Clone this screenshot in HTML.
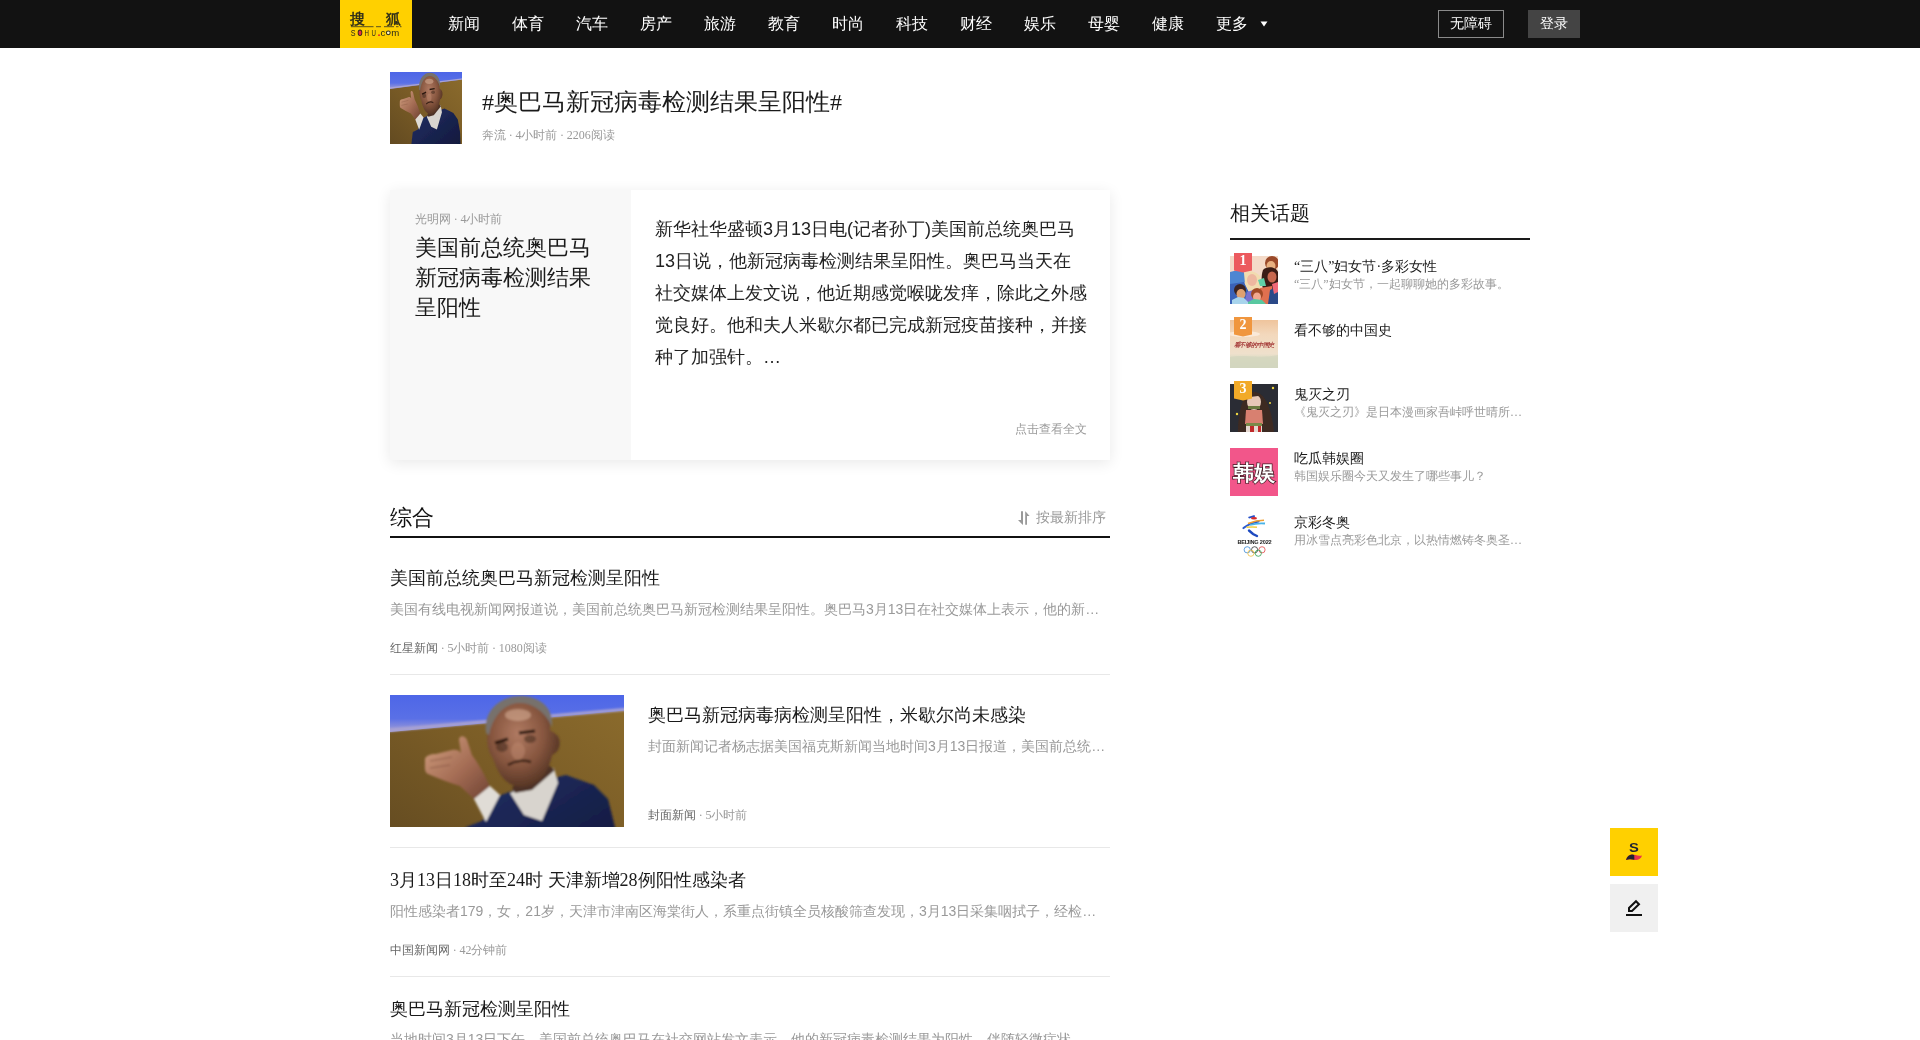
<!DOCTYPE html>
<html><head><meta charset="utf-8">
<style>
*{margin:0;padding:0;box-sizing:border-box}
html,body{width:1920px;height:1040px;overflow:hidden;background:#fff}
body{font-family:"Liberation Sans",sans-serif;color:#1a1a1a;position:relative}
.abs{position:absolute;white-space:nowrap}
.serif{font-family:"Liberation Serif",serif}
#nav{position:absolute;left:0;top:0;width:1920px;height:48px;background:#121212}
.nv{position:absolute;top:0;height:48px;line-height:48px;font-size:16px;color:#fff}
.btn1{position:absolute;left:1438px;top:10px;width:66px;height:28px;border:1px solid #8a8a8a;color:#fff;font-size:14px;line-height:24px;text-align:center}
.btn2{position:absolute;left:1528px;top:10px;width:52px;height:28px;background:#444;color:#fff;font-size:14px;line-height:26px;text-align:center}
#card{position:absolute;left:390px;top:190px;width:720px;height:270px;background:#fff;box-shadow:0 3px 14px rgba(0,0,0,.09)}
#cardl{position:absolute;left:0;top:0;width:241px;height:270px;background:#f8f8f8}
.ttl18{font-size:18px;line-height:24px;color:#1a1a1a}
.desc{font-size:14px;line-height:20px;color:#999}
.meta{font-size:12px;line-height:16px;color:#999;word-spacing:-0.3px}
.meta b{font-weight:normal;color:#666}
.divl{position:absolute;left:390px;width:720px;height:1px;background:#e8e8e8}
.tp{position:absolute;left:1230px;width:300px;height:48px}
.tp .im{position:absolute;left:0;top:0;width:48px;height:48px;overflow:hidden}
.tp .t{position:absolute;left:64px;top:1px;font-family:"Liberation Serif",serif;font-size:14px;line-height:20px;color:#1a1a1a;white-space:nowrap}
.tp .d{position:absolute;left:64px;top:20px;font-family:"Liberation Serif",serif;font-size:12px;line-height:16px;color:#999;white-space:nowrap}
.badge{position:absolute;left:4px;top:-3px}
</style></head>
<body>
<svg width="0" height="0" style="position:absolute">
<defs>
<linearGradient id="gBrown" x1="0" y1="1" x2="1" y2="0">
  <stop offset="0" stop-color="#5e4720"/>
  <stop offset="0.5" stop-color="#7a5c26"/>
  <stop offset="1" stop-color="#8e6e2e"/>
</linearGradient>
<linearGradient id="gBlue" x1="0" y1="0" x2="0" y2="1">
  <stop offset="0" stop-color="#4862e8"/>
  <stop offset="0.7" stop-color="#5a70e6"/>
  <stop offset="1" stop-color="#a9a2d4"/>
</linearGradient>
<radialGradient id="gFace" cx="0.42" cy="0.4" r="0.65">
  <stop offset="0" stop-color="#b07a62"/>
  <stop offset="0.55" stop-color="#87563f"/>
  <stop offset="1" stop-color="#4e3020"/>
</radialGradient>
<linearGradient id="gHand" x1="0" y1="0" x2="1" y2="1">
  <stop offset="0" stop-color="#d2a080"/>
  <stop offset="0.55" stop-color="#a46c54"/>
  <stop offset="1" stop-color="#6e4232"/>
</linearGradient>
<linearGradient id="gSuit" x1="0" y1="0" x2="1" y2="1">
  <stop offset="0" stop-color="#243066"/>
  <stop offset="1" stop-color="#0e1638"/>
</linearGradient>
<filter id="soft2" x="-10%" y="-10%" width="120%" height="120%"><feGaussianBlur stdDeviation="0.5"/></filter>
<filter id="soft" x="-10%" y="-10%" width="120%" height="120%"><feGaussianBlur stdDeviation="1"/></filter>
<g id="obama">
  <rect x="-10" y="-10" width="260" height="190" fill="url(#gBrown)"/>
  <path d="M-10 -10H250V14L-10 38Z" fill="url(#gBlue)"/>
  <g filter="url(#soft)">
  <path d="M-10 36L250 13" stroke="#aaa3d2" stroke-width="3" fill="none"/>
  <path d="M68 180L76 132L92 126L106 102L122 96L150 86L176 80L204 90L218 104L225 132L228 180Z" fill="url(#gSuit)"/>
  <path d="M120 98L142 88L164 73L168 88L152 126L134 120Z" fill="#d8d4ce"/>
  <path d="M122 92L158 70L165 75L142 95L125 98Z" fill="#4e3226"/>
  <path d="M98 34C97 12 115 3 129 3C149 3 162 14 160 35L167 40C172 46 170 57 162 60C159 76 150 91 133 92C117 92 108 80 103 63C98 57 96 47 98 34Z" fill="url(#gFace)"/>
  <path d="M96 38C93 14 112 1 130 1C150 1 164 13 162 32C157 20 145 8 130 8C115 8 103 20 99 40Z" fill="#77716c"/>
  <ellipse cx="128" cy="20" rx="13" ry="6" fill="#d8b098" opacity=".55"/>
  <ellipse cx="112" cy="52" rx="6" ry="5" fill="#3a2418" opacity=".5"/><ellipse cx="140" cy="44" rx="6" ry="4" fill="#3a2418" opacity=".5"/>
  <ellipse cx="128" cy="56" rx="7" ry="9" fill="#c08a70" opacity=".5"/>
  <path d="M105 48L118 44M129 38L145 36" stroke="#2a1810" stroke-width="3" fill="none"/>
  <path d="M118 70C126 65 136 65 141 67" stroke="#3a2218" stroke-width="2.5" fill="none"/>
  <path d="M35 66C34 61 40 59 46 59L62 55C66 54 69 55 71 58L69 45C69 40 75 40 77 45L82 60C88 68 95 80 100 92L98 100C92 104 86 105 84 104L70 91C60 88 48 83 38 79C34 77 35 71 35 66Z" fill="url(#gHand)"/>
  <path d="M40 66L62 62M40 73L60 70" stroke="#7a4a38" stroke-width="1.2" fill="none" opacity=".6"/>
  <path d="M84 104L100 91L110 100L96 127Z" fill="#e0dcd6"/>
  </g>
</g>
</defs>
</svg>
<div id="wrap" style="position:absolute;left:0;top:0;width:1920px;height:1040px;will-change:transform">
<div id="nav">
  <svg id="logo" width="72" height="48" viewBox="0 0 72 48" style="position:absolute;left:340px;top:0">
  <rect width="72" height="48" fill="#ffd000"/>
  <text x="10" y="23.6" font-size="15" fill="#2a2a1a" stroke="#2a2a1a" stroke-width="0.45" font-family="Liberation Serif">搜</text>
  <text x="45.5" y="23.6" font-size="15" fill="#2a2a1a" stroke="#2a2a1a" stroke-width="0.45" font-family="Liberation Serif">狐</text>
  <path d="M11 26.7H33.5M36 26.7H41M44 26.7H54M56 26.7H58.5M60 26.7H61.5" stroke="#4a4420" stroke-width="0.9" fill="none"/>
  <g font-family="Liberation Sans" font-size="9" fill="#2a2a1a">
    <text x="0" y="36" transform="translate(10.8 0) scale(0.8 1)">S</text>
    <ellipse cx="20" cy="32.8" rx="2.3" ry="3.2" fill="#2a2a1a"/>
    <ellipse cx="20" cy="32.8" rx="1.5" ry="2.4" fill="#e83040"/>
    <text x="0" y="36" transform="translate(24.6 0) scale(0.68 1)">H</text>
    <text x="0" y="36" transform="translate(31.6 0) scale(0.68 1)">U</text>
    <rect x="38.2" y="34.4" width="1.6" height="1.6" fill="#e02020"/>
    <text x="40.6" y="36" font-size="9.6">c</text>
    <circle cx="48.3" cy="32.8" r="2.4" fill="#2a2a1a"/>
    <circle cx="48.3" cy="32.8" r="1.4" fill="#fff6c0"/>
    <text x="51.2" y="36" font-size="9.6">m</text>
  </g>
</svg>
  <div class="nv" style="left:448px">新闻</div>
  <div class="nv" style="left:512px">体育</div>
  <div class="nv" style="left:576px">汽车</div>
  <div class="nv" style="left:640px">房产</div>
  <div class="nv" style="left:704px">旅游</div>
  <div class="nv" style="left:768px">教育</div>
  <div class="nv" style="left:832px">时尚</div>
  <div class="nv" style="left:896px">科技</div>
  <div class="nv" style="left:960px">财经</div>
  <div class="nv" style="left:1024px">娱乐</div>
  <div class="nv" style="left:1088px">母婴</div>
  <div class="nv" style="left:1152px">健康</div>
  <div class="nv" style="left:1216px">更多</div>
  <svg class="abs" style="left:1260px;top:21px" width="8" height="6" viewBox="0 0 8 6"><path d="M0.5 0.5H7.5L4 5.5Z" fill="#fff"/></svg>
  <div class="btn1">无障碍</div>
  <div class="btn2">登录</div>
</div>

<!-- topic header -->
<svg class="abs" style="left:390px;top:72px" width="72" height="72" viewBox="0 0 72 72"><use href="#obama" transform="translate(-1.3,0.3) scale(0.317,0.453)"/></svg>
<div class="abs serif" style="left:482px;top:86px;font-size:24px;line-height:32px;color:#1a1a1a">#奥巴马新冠病毒检测结果呈阳性#</div>
<div class="abs serif meta" style="left:482px;top:127px">奔流 · 4小时前 · 2206阅读</div>

<!-- card -->
<div id="card">
  <div id="cardl"></div>
  <div class="abs meta serif" style="left:25px;top:21px">光明网 · 4小时前</div>
  <div class="abs" style="left:25px;top:43px;font-size:22px;line-height:30px;color:#1a1a1a;white-space:normal">美国前总统奥巴马<br>新冠病毒检测结果<br>呈阳性</div>
  <div class="abs" style="left:265px;top:23px;font-size:18px;line-height:32px;color:#222;white-space:normal">新华社华盛顿3月13日电(记者孙丁)美国前总统奥巴马<br>13日说，他新冠病毒检测结果呈阳性。奥巴马当天在<br>社交媒体上发文说，他近期感觉喉咙发痒，除此之外感<br>觉良好。他和夫人米歇尔都已完成新冠疫苗接种，并接<br>种了加强针。…</div>
  <div class="abs meta" style="left:625px;top:231px">点击查看全文</div>
</div>

<!-- section header -->
<div class="abs" style="left:390px;top:504px;font-size:22px;line-height:28px;color:#111">综合</div>
<svg class="abs" style="left:1018px;top:511px" width="12" height="14" viewBox="0 0 12 14"><path d="M3 0.2H5V13.8H4.6L0 9H3Z" fill="#999"/><path d="M7.2 13.8V0.6H7.6L11.6 4.9H9V13.8Z" fill="#999"/></svg>
<div class="abs" style="left:1036px;top:507px;font-size:14px;line-height:20px;color:#999">按最新排序</div>
<div class="abs" style="left:390px;top:536px;width:720px;height:2px;background:#111"></div>

<!-- list item 1 -->
<div class="abs serif ttl18" style="left:390px;top:566px">美国前总统奥巴马新冠检测呈阳性</div>
<div class="abs desc" style="left:390px;top:599px">美国有线电视新闻网报道说，美国前总统奥巴马新冠检测结果呈阳性。奥巴马3月13日在社交媒体上表示，他的新…</div>
<div class="abs serif meta" style="left:390px;top:640px"><b>红星新闻</b> · 5小时前 · 1080阅读</div>
<div class="divl" style="top:674px"></div>

<!-- list item 2 -->
<svg class="abs" style="left:390px;top:695px" width="234" height="132" viewBox="0 0 234 132"><use href="#obama"/></svg>
<div class="abs serif ttl18" style="left:648px;top:703px">奥巴马新冠病毒病检测呈阳性，米歇尔尚未感染</div>
<div class="abs desc" style="left:648px;top:736px">封面新闻记者杨志据美国福克斯新闻当地时间3月13日报道，美国前总统…</div>
<div class="abs serif meta" style="left:648px;top:807px"><b>封面新闻</b> · 5小时前</div>
<div class="divl" style="top:847px"></div>

<!-- list item 3 -->
<div class="abs serif ttl18" style="left:390px;top:868px">3月13日18时至24时 天津新增28例阳性感染者</div>
<div class="abs desc" style="left:390px;top:901px">阳性感染者179，女，21岁，天津市津南区海棠街人，系重点街镇全员核酸筛查发现，3月13日采集咽拭子，经检…</div>
<div class="abs serif meta" style="left:390px;top:942px"><b>中国新闻网</b> · 42分钟前</div>
<div class="divl" style="top:976px"></div>

<!-- list item 4 -->
<div class="abs serif ttl18" style="left:390px;top:997px">奥巴马新冠检测呈阳性</div>
<div class="abs desc" style="left:390px;top:1029px">当地时间3月13日下午，美国前总统奥巴马在社交网站发文表示，他的新冠病毒检测结果为阳性，伴随轻微症状…</div>

<!-- sidebar -->
<div class="abs" style="left:1230px;top:199px;font-size:20px;line-height:28px;color:#1a1a1a">相关话题</div>
<div class="abs" style="left:1230px;top:238px;width:300px;height:2px;background:#1a1a1a"></div>

<div class="tp" style="top:256px"><svg class="im" width="48" height="48" viewBox="0 0 48 48">
  <rect width="48" height="48" fill="#f4dac8"/>
  <g filter="url(#soft2)">
  <path d="M0 16L12 13L18 24L10 30L0 31Z" fill="#4e86d2"/>
  <path d="M0 28L14 26L20 38L18 48H0Z" fill="#3a62b8"/>
  <path d="M14 17C18 14 26 15 30 20L31 34L20 38L15 28Z" fill="#f2dcb0"/>
  <ellipse cx="22" cy="24" rx="5" ry="6" fill="#eeb8a0"/>
  <path d="M17 36L26 33L30 44L20 48H14Z" fill="#7a72d0"/>
  <circle cx="42" cy="7" r="7" fill="#9a4a2a"/>
  <ellipse cx="41" cy="10" rx="4.5" ry="5" fill="#e8b080"/>
  <path d="M33 14C36 10 46 10 48 16V40L40 42L34 36C31 28 31 20 33 14Z" fill="#3a1e18"/>
  <ellipse cx="42" cy="21" rx="4.5" ry="5.5" fill="#c86850"/>
  <path d="M28 24L34 22L36 30L30 30Z" fill="#60d0a8"/>
  <path d="M30 32L42 30L44 48H30Z" fill="#e07050"/>
  <path d="M40 34L48 30V48H38Z" fill="#2a4a88"/>
  <path d="M42 28L48 26V36L44 38Z" fill="#f06878"/>
  <circle cx="10" cy="34" r="6" fill="#3a2420"/>
  <ellipse cx="11" cy="38" rx="4.5" ry="5" fill="#e0a070"/>
  <path d="M2 44L8 41L14 42L20 48H2Z" fill="#a8d4ec"/>
  <circle cx="27" cy="38" r="6" fill="#a04a28"/>
  <ellipse cx="27" cy="41" rx="4" ry="4.5" fill="#f0a890"/>
  <path d="M18 46L24 43L32 44L36 48H18Z" fill="#58c8a0"/>
  </g>
</svg><svg class="badge" width="18" height="20" viewBox="0 0 18 20"><path d="M0 0H18V17.5L9 19.5L0 17.5Z" fill="#ec5a5e"/><text x="9" y="12.2" text-anchor="middle" font-family="Liberation Serif" font-size="14" font-weight="bold" fill="#fff">1</text></svg><div class="t">“三八”妇女节·多彩女性</div><div class="d">“三八”妇女节，一起聊聊她的多彩故事。</div></div>
<div class="tp" style="top:320px"><svg class="im" width="48" height="48" viewBox="0 0 48 48">
  <defs><linearGradient id="gHist" x1="0" y1="0" x2="0" y2="1"><stop offset="0" stop-color="#efc49c"/><stop offset=".3" stop-color="#f3d8bc"/><stop offset=".7" stop-color="#efe0cc"/><stop offset=".8" stop-color="#dcdcc4"/><stop offset="1" stop-color="#d4d8c2"/></linearGradient></defs>
  <rect width="48" height="48" fill="url(#gHist)"/>
  <ellipse cx="14" cy="14" rx="16" ry="3" fill="#fbeee0" opacity=".8"/>
  <path d="M0 37C12 34 30 39 48 35V48H0Z" fill="#d0d4bc" opacity=".6"/>
  <text x="24" y="27" text-anchor="middle" font-family="Liberation Serif" font-size="6.4" font-style="italic" fill="#a03030" stroke="#a03030" stroke-width="0.15" letter-spacing="-0.2">看不够的中国史</text>
</svg><svg class="badge" width="18" height="20" viewBox="0 0 18 20"><path d="M0 0H18V17.5L9 19.5L0 17.5Z" fill="#f0963e"/><text x="9" y="12.2" text-anchor="middle" font-family="Liberation Serif" font-size="14" font-weight="bold" fill="#fff">2</text></svg><div class="t">看不够的中国史</div></div>
<div class="tp" style="top:384px"><svg class="im" width="48" height="48" viewBox="0 0 48 48">
  <rect width="48" height="48" fill="#2a2c34"/>
  <g filter="url(#soft2)">
  <path d="M8 48C8 30 12 8 24 8C36 8 42 28 44 48Z" fill="#3e2a22"/>
  <ellipse cx="24" cy="18" rx="7" ry="8" fill="#e6c8b8"/>
  <path d="M17 12C20 7 30 7 32 14L28 12L20 13Z" fill="#3e2a22"/>
  <rect x="18" y="22" width="12" height="3" fill="#6a7a40"/>
  <path d="M16 26H32L33 40H15Z" fill="#d88070"/>
  <rect x="16" y="39" width="16" height="3" fill="#7a8a48"/>
  <path d="M16 42H32V48H16Z" fill="#e6d8d0"/>
  <rect x="20" y="42" width="4" height="6" fill="#c02a2a"/>
  <rect x="28" y="42" width="3" height="6" fill="#c02a2a"/>
  <circle cx="7" cy="30" r="1.2" fill="#f0d840"/><circle cx="43" cy="4" r="1.2" fill="#f0d840"/><circle cx="40" cy="19" r="1" fill="#f0d840"/>
  </g>
</svg><svg class="badge" width="18" height="20" viewBox="0 0 18 20"><path d="M0 0H18V17.5L9 19.5L0 17.5Z" fill="#f2aa28"/><text x="9" y="12.2" text-anchor="middle" font-family="Liberation Serif" font-size="14" font-weight="bold" fill="#fff">3</text></svg><div class="t">鬼灭之刃</div><div class="d">《鬼灭之刃》是日本漫画家吾峠呼世晴所…</div></div>
<div class="tp" style="top:448px"><svg class="im" width="48" height="48" viewBox="0 0 48 48">
  <rect width="48" height="48" fill="#f2568a"/>
  <text x="24" y="32" text-anchor="middle" font-family="Liberation Serif" font-size="21" font-weight="bold" fill="#fff" stroke="#3a1a20" stroke-width="1.4" paint-order="stroke" letter-spacing="0">韩娱</text>
</svg><div class="t">吃瓜韩娱圈</div><div class="d">韩国娱乐圈今天又发生了哪些事儿？</div></div>
<div class="tp" style="top:512px"><svg class="im" width="48" height="48" viewBox="0 0 48 48">
  <rect width="48" height="48" fill="#fff"/>
  <g filter="url(#soft2)">
  <path d="M18 5L24.5 3L25 5L19 6.5Z" fill="#2850c8"/>
  <ellipse cx="24" cy="6.2" rx="3" ry="1.3" fill="#d82a2a"/>
  <path d="M13.5 16C18 12.5 23 10.5 28.5 9.5" stroke="#2a5ad0" stroke-width="2.2" fill="none" stroke-linecap="round"/>
  <path d="M18 11.5C23 9.5 29 8.2 34 8.2" stroke="#f0a030" stroke-width="1.4" fill="none"/>
  <path d="M20 13C25 11.5 30 11 35 11.5" stroke="#48b4e8" stroke-width="1.8" fill="none"/>
  <path d="M16.5 15.3C20 15 24 15 27 15.2" stroke="#f2d040" stroke-width="1.4" fill="none"/>
  <path d="M19 18.5L23 22L27 24" stroke="#1e4ac0" stroke-width="2.4" fill="none" stroke-linecap="round"/>
  </g>
  <text x="24.5" y="32" text-anchor="middle" font-family="Liberation Sans" font-weight="bold" font-size="5.6" fill="#222" letter-spacing="-0.2">BEIJING 2022</text>
  <g fill="none" stroke-width="0.8">
  <circle cx="17.2" cy="37.8" r="3.1" stroke="#3a8ad8"/><circle cx="24.6" cy="37.8" r="3.1" stroke="#333"/><circle cx="32" cy="37.8" r="3.1" stroke="#e04848"/>
  <circle cx="20.9" cy="41.2" r="3.1" stroke="#f0c040"/><circle cx="28.3" cy="41.2" r="3.1" stroke="#30a050"/>
  </g>
</svg><div class="t">京彩冬奥</div><div class="d">用冰雪点亮彩色北京，以热情燃铸冬奥圣…</div></div>

<!-- floating -->
<div class="abs" style="left:1610px;top:828px;width:48px;height:48px;background:#ffd000"><svg width="48" height="48" viewBox="0 0 48 48" style="position:absolute;left:0;top:0">
  <text x="24" y="24.4" text-anchor="middle" font-family="Liberation Sans" font-weight="bold" font-size="12.5" fill="#1e2232" transform="translate(24 0) scale(1.18 1) translate(-24 0)">S</text>
  <path d="M16 32C16.8 28.8 19.2 26.6 22 26.6C25 26.6 27.4 28.4 32 27.6C31.2 30.6 28.6 32.2 25.4 32C22 31.8 19.6 30.6 16 32Z" fill="#e8344c"/>
  <path d="M16 32C16.8 28.8 19.2 26.6 22 26.6C22.8 26.6 23.6 26.8 24.2 27.1L24.4 31.7C21.4 31.2 19.2 30.6 16 32Z" fill="#23222e"/>
</svg></div>
<div class="abs" style="left:1610px;top:884px;width:48px;height:48px;background:#f0f0f0"><svg width="48" height="48" viewBox="0 0 48 48" style="position:absolute;left:0;top:0">
  <path d="M26 17.2L29 20.3L22 27H19V24Z" stroke="#111" stroke-width="2" fill="none" stroke-linejoin="miter"/>
  <rect x="16" y="30" width="16" height="2" fill="#111"/>
</svg></div>
</div>
</body></html>
